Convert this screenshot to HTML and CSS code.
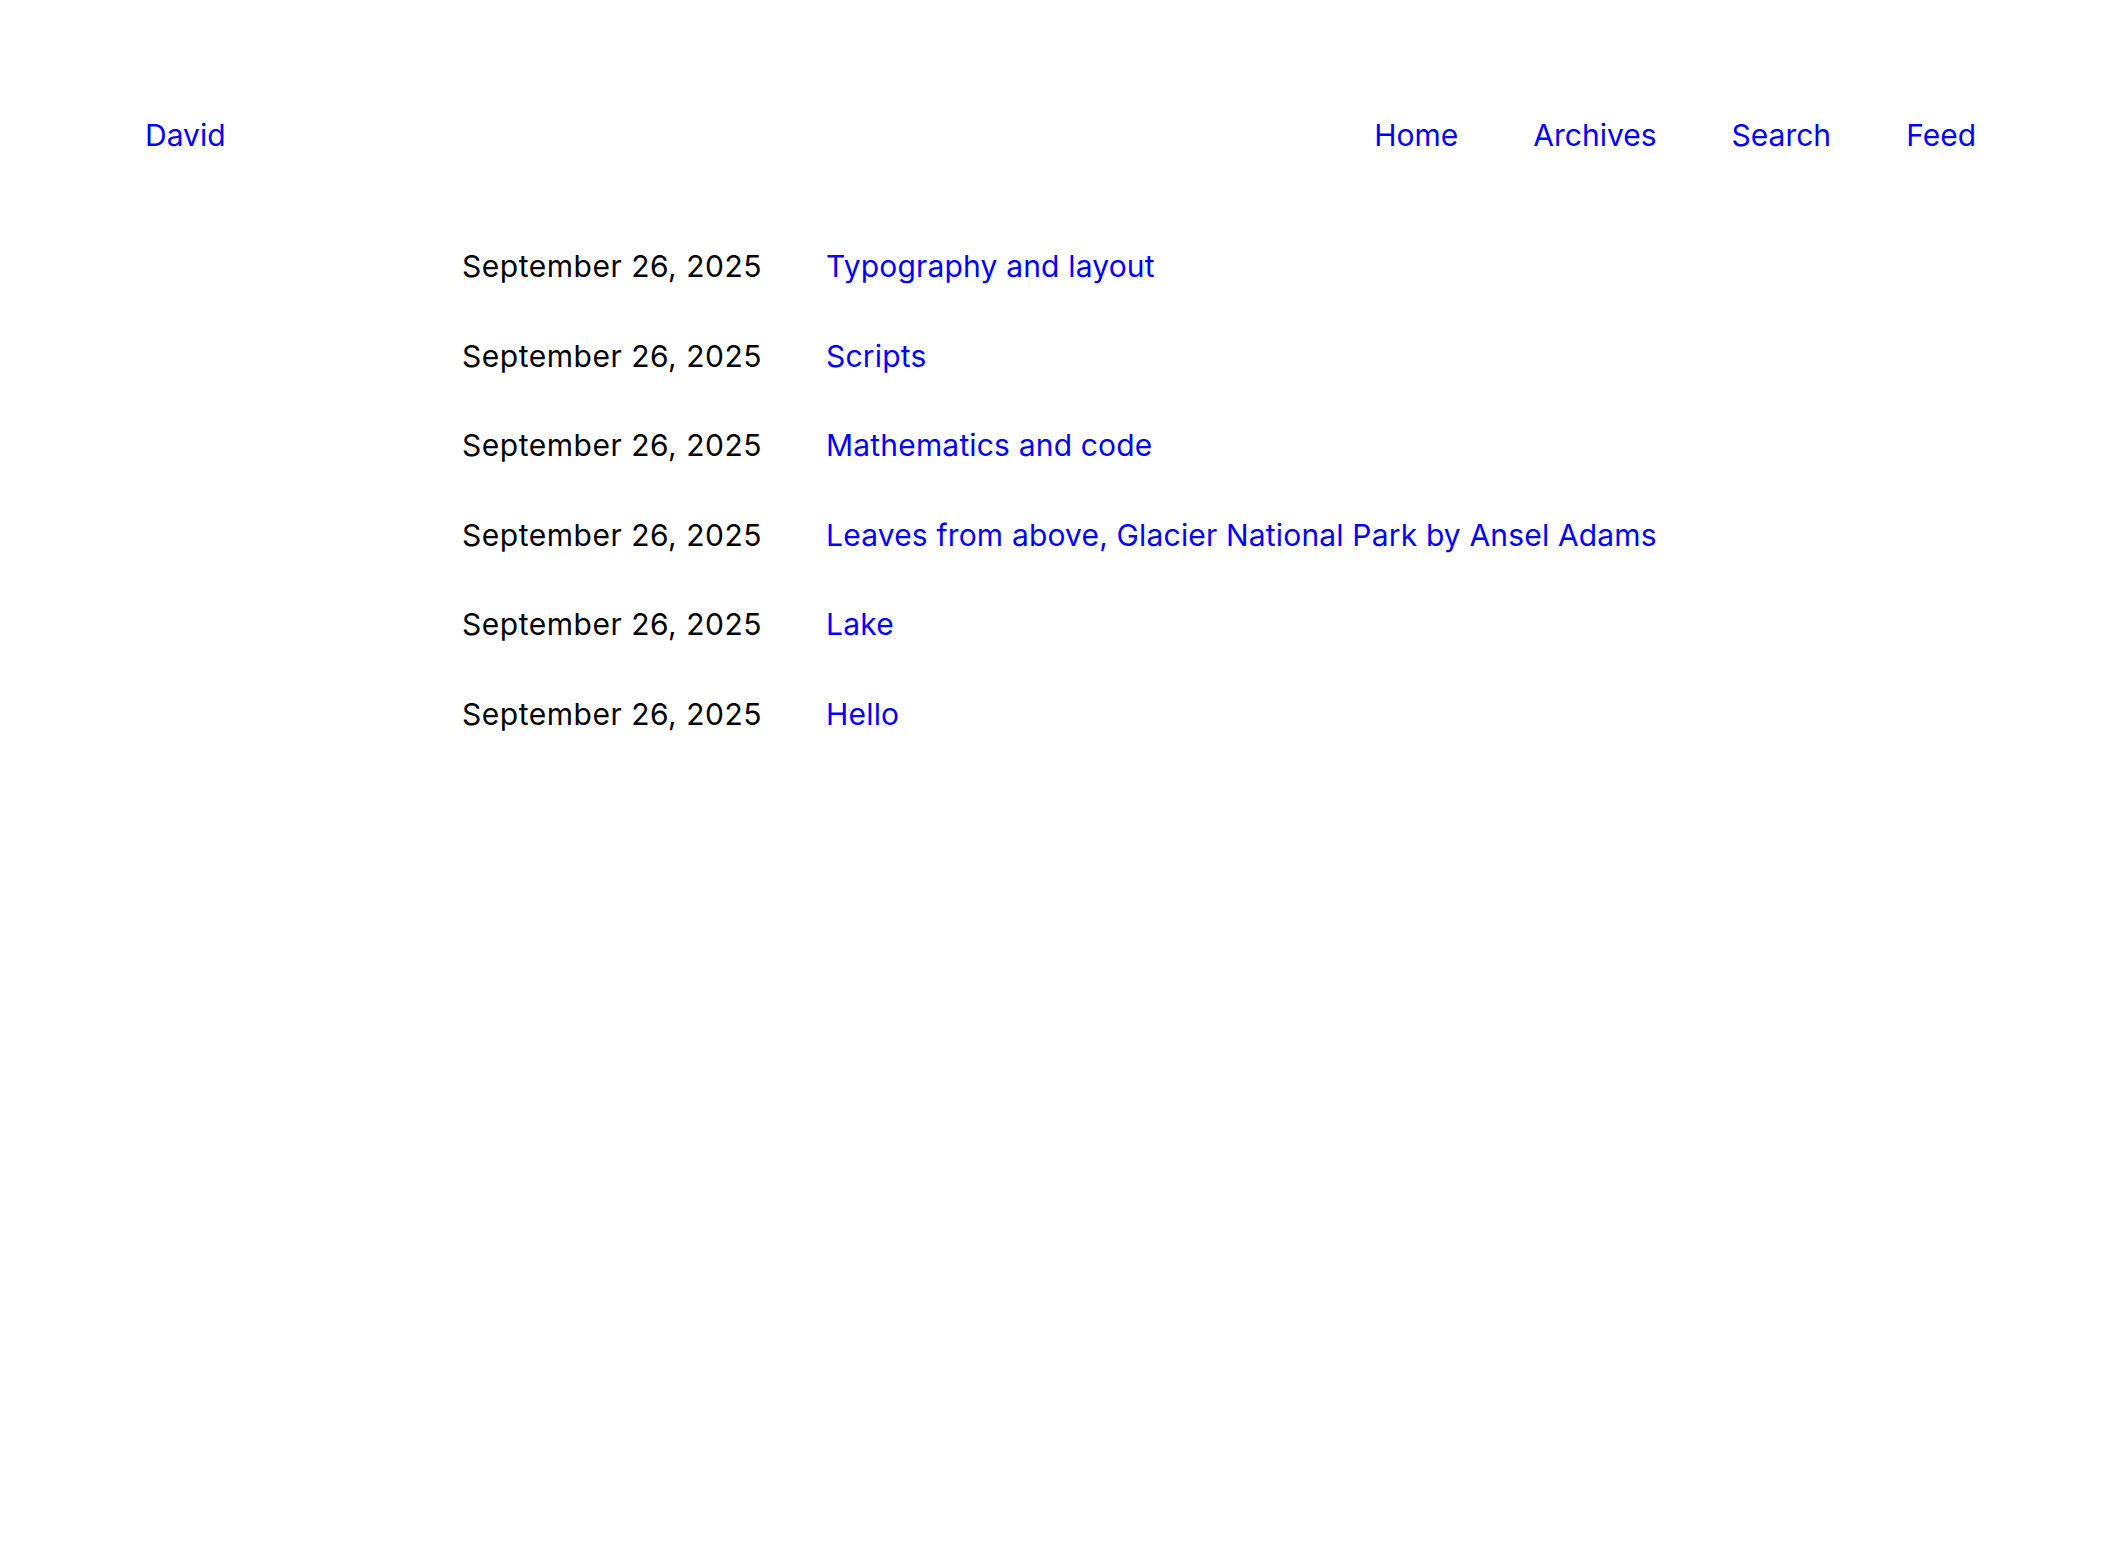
FILE: index.html
```html
<!DOCTYPE html>
<html lang="en">
<head>
<meta charset="utf-8">
<title>David</title>
<link rel="stylesheet" href="styles.css">
</head>
<body>
<header class="site-header">
  <a class="brand" href="#">David</a>
  <nav class="nav">
    <a href="#">Home</a>
    <a href="#">Archives</a>
    <a href="#">Search</a>
    <a href="#">Feed</a>
  </nav>
</header>
<main class="posts">
  <div class="post"><span class="date">September 26, 2025</span><a href="#">Typography and layout</a></div>
  <div class="post"><span class="date">September 26, 2025</span><a href="#">Scripts</a></div>
  <div class="post"><span class="date">September 26, 2025</span><a href="#">Mathematics and code</a></div>
  <div class="post"><span class="date">September 26, 2025</span><a href="#">Leaves from above, Glacier National Park by Ansel Adams</a></div>
  <div class="post"><span class="date">September 26, 2025</span><a href="#">Lake</a></div>
  <div class="post"><span class="date">September 26, 2025</span><a href="#">Hello</a></div>
</main>
</body>
</html>
```
FILE: styles.css
```css
html, body {
  margin: 0;
  padding: 0;
  background: #fff;
}
body {
  font-family: Inter, "Liberation Sans", sans-serif;
  font-size: 30px;
  line-height: 45px;
  color: #000;
}
a {
  color: #0000ff;
  text-decoration: none;
}
.site-header {
  display: flex;
  justify-content: space-between;
  align-items: center;
  padding: 113px 144px 0 145px;
}
.nav {
  display: flex;
  gap: 75px;
}
.posts {
  width: 1200px;
  margin: 86px auto 0;
  display: flex;
  flex-direction: column;
  gap: 44.5px;
}
.post {
  display: flex;
  gap: 64px;
  padding-left: 2px;
}
.post a {
  letter-spacing: 0.17px;
}
.date {
  color: #000;
  letter-spacing: 0.52px;
}
```
